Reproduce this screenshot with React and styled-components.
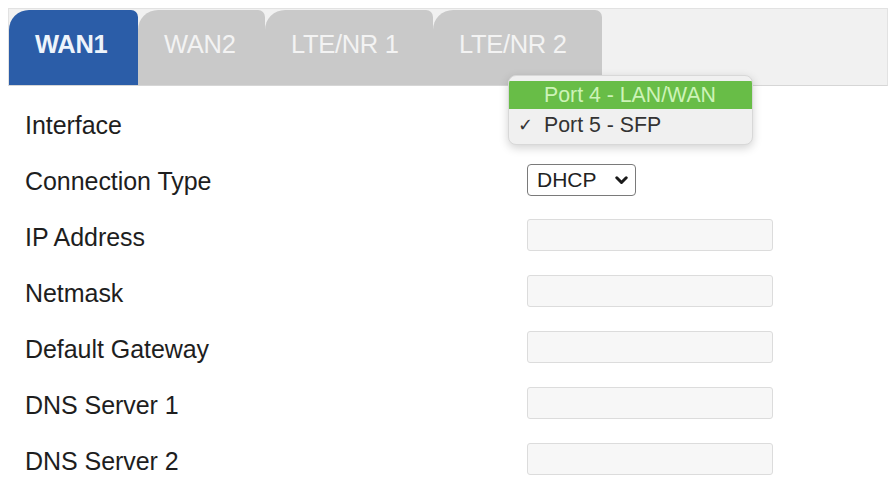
import React from "react";
import styled, { createGlobalStyle } from "styled-components";

const Global = createGlobalStyle`
  html, body { margin: 0; padding: 0; background: #fff; }
  body { font-family: "Liberation Sans", Arial, Helvetica, sans-serif; }
`;

const Page = styled.div`
  position: relative;
  width: 893px;
  height: 481px;
  padding: 8px 5px 0 8px;
  box-sizing: border-box;
  overflow: hidden;
`;

const TabBar = styled.div`
  display: flex;
  height: 78px;
  box-sizing: border-box;
  background: #f1f1f1;
  border: 1px solid #e2e2e2;
  border-bottom-color: #d6d6d6;
`;

const Tab = styled.div`
  display: flex;
  align-items: center;
  box-sizing: border-box;
  width: ${(p) => p.$w}px;
  padding-left: ${(p) => p.$pl}px;
  margin-top: 1px;
  border-radius: 20px 7px 0 0;
  background: ${(p) => (p.$active ? "#2b5da8" : "#c9c9c9")};
  color: ${(p) => (p.$active ? "#eef4fb" : "#f3f3f3")};
  font-size: 25.5px;
  font-weight: ${(p) => (p.$active ? 600 : 400)};
  letter-spacing: -0.3px;
  padding-bottom: 6px;
`;

const Form = styled.div`
  display: grid;
  grid-template-columns: 502px 1fr;
  grid-auto-rows: 56px;
  padding: 11px 0 0 17px;
`;

const Label = styled.div`
  display: flex;
  align-items: center;
  font-size: 25px;
  color: #1e1e1e;
  letter-spacing: -0.05px;
`;

const Cell = styled.div`
  display: flex;
  align-items: center;
  padding-bottom: ${(p) => p.$pb || 0}px;
`;

const TextBox = styled.div`
  width: 246px;
  height: 32px;
  box-sizing: border-box;
  background: #f7f7f7;
  border: 1px solid #dcdcdc;
  border-radius: 3px;
`;

const SelectBox = styled.div`
  display: flex;
  align-items: center;
  justify-content: space-between;
  width: 109px;
  height: 32px;
  box-sizing: border-box;
  padding: 0 7px 0 9px;
  background: #fff;
  border: 1.5px solid #7a7a7a;
  border-radius: 4px;
  font-size: 21px;
  color: #222;
  margin-top: -2px;
`;

const Menu = styled.div`
  position: absolute;
  left: 508px;
  top: 75px;
  width: 245px;
  height: 70px;
  box-sizing: border-box;
  padding-top: 5px;
  background: #f0f0f0;
  border: 1px solid #d8d8d8;
  border-radius: 8px;
  box-shadow: 0 3px 10px rgba(0, 0, 0, 0.18);
  overflow: hidden;
`;

const MenuItem = styled.div`
  display: flex;
  align-items: center;
  height: 28px;
  padding-left: 9px;
  font-size: 21.3px;
  background: ${(p) => (p.$hl ? "#68bd47" : "transparent")};
  color: ${(p) => (p.$hl ? "#cdf3b8" : "#333")};
  margin-bottom: 2px;
`;

const Check = styled.span`
  display: inline-block;
  width: 26px;
  font-size: 18px;
`;

const tabs = [
  { label: "WAN1", w: 129, active: true },
  { label: "WAN2", w: 127 },
  { label: "LTE/NR 1", w: 168 },
  { label: "LTE/NR 2", w: 169 },
];

const rows = [
  "IP Address",
  "Netmask",
  "Default Gateway",
  "DNS Server 1",
  "DNS Server 2",
];

export default function App() {
  return (
    <>
      <Global />
      <Page>
        <TabBar>
          {tabs.map((t) => (
            <Tab key={t.label} $w={t.w} $pl={26} $active={t.active}>
              {t.label}
            </Tab>
          ))}
        </TabBar>
        <Form>
          <Label>Interface</Label>
          <Cell />
          <Label>Connection Type</Label>
          <Cell>
            <SelectBox>
              DHCP
              <svg width="13" height="9" viewBox="0 0 13 9">
                <path d="M1.8 1.8 L6.5 6.5 L11.2 1.8" fill="none" stroke="#1a1a1a" strokeWidth="3" strokeLinecap="round" strokeLinejoin="round" />
              </svg>
            </SelectBox>
          </Cell>
          {rows.map((r) => (
            <React.Fragment key={r}>
              <Label>{r}</Label>
              <Cell $pb={4}>
                <TextBox />
              </Cell>
            </React.Fragment>
          ))}
        </Form>
        <Menu>
          <MenuItem $hl>
            <Check />
            Port 4 - LAN/WAN
          </MenuItem>
          <MenuItem>
            <Check>✓</Check>
            Port 5 - SFP
          </MenuItem>
        </Menu>
      </Page>
    </>
  );
}
